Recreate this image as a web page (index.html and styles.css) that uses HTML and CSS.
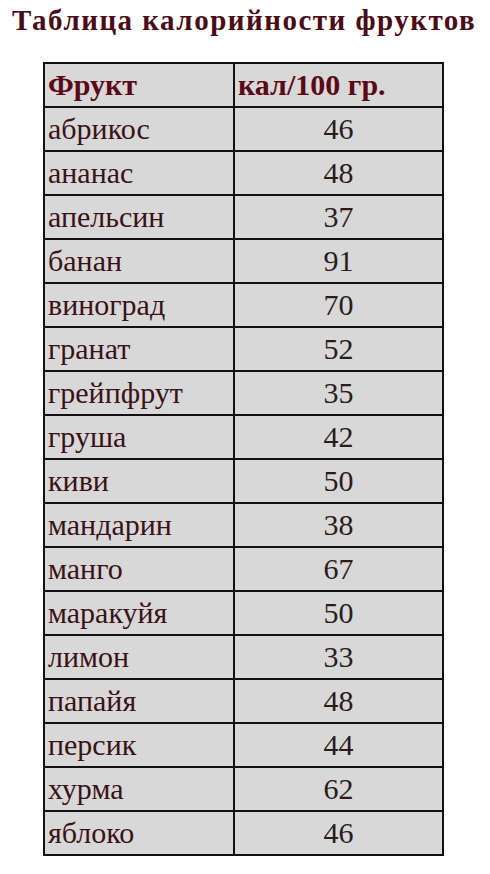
FILE: index.html
```html
<!DOCTYPE html>
<html lang="ru">
<head>
<meta charset="utf-8">
<link rel="stylesheet" href="styles.css">
</head>
<body>
<div class="page">
  <h1 class="title">Таблица калорийности фруктов</h1>
  <table class="cal">
    <thead>
      <tr><th class="c1">Фрукт</th><th class="c2">кал/100 гр.</th></tr>
    </thead>
    <tbody>
      <tr><td class="name">абрикос</td><td class="num">46</td></tr>
      <tr><td class="name">ананас</td><td class="num">48</td></tr>
      <tr><td class="name">апельсин</td><td class="num">37</td></tr>
      <tr><td class="name">банан</td><td class="num">91</td></tr>
      <tr><td class="name">виноград</td><td class="num">70</td></tr>
      <tr><td class="name">гранат</td><td class="num">52</td></tr>
      <tr><td class="name">грейпфрут</td><td class="num">35</td></tr>
      <tr><td class="name">груша</td><td class="num">42</td></tr>
      <tr><td class="name">киви</td><td class="num">50</td></tr>
      <tr><td class="name">мандарин</td><td class="num">38</td></tr>
      <tr><td class="name">манго</td><td class="num">67</td></tr>
      <tr><td class="name">маракуйя</td><td class="num">50</td></tr>
      <tr><td class="name">лимон</td><td class="num">33</td></tr>
      <tr><td class="name">папайя</td><td class="num">48</td></tr>
      <tr><td class="name">персик</td><td class="num">44</td></tr>
      <tr><td class="name">хурма</td><td class="num">62</td></tr>
      <tr><td class="name">яблоко</td><td class="num">46</td></tr>
    </tbody>
  </table>
</div>
</body>
</html>
```
FILE: styles.css
```css
html, body {
  margin: 0;
  padding: 0;
  background: #ffffff;
}
.page {
  font-family: "Liberation Serif", "Times New Roman", serif;
  padding-top: 5px;
}
.title {
  margin: 0 0 0 12px;
  font-size: 29px;
  line-height: 30px;
  letter-spacing: 1.5px;
  font-weight: bold;
  color: #4a0c16;
  white-space: nowrap;
}
.cal {
  margin: 27px 0 0 43px;
  border-collapse: collapse;
  width: 401px;
  background: #d8d8d8;
}
.cal th, .cal td {
  border: 2px solid #111;
  height: 42px;
  padding: 0 0 0 3px;
  font-size: 30px;
  line-height: 34px;
  vertical-align: middle;
}
.cal th {
  text-align: left;
  font-weight: bold;
  color: #5a0a16;
}
.cal .c1 { width: 185px; }
.cal .name {
  color: #3a1216;
}
.cal .num {
  text-align: center;
  color: #2a1c1c;
  padding: 0;
}
```
